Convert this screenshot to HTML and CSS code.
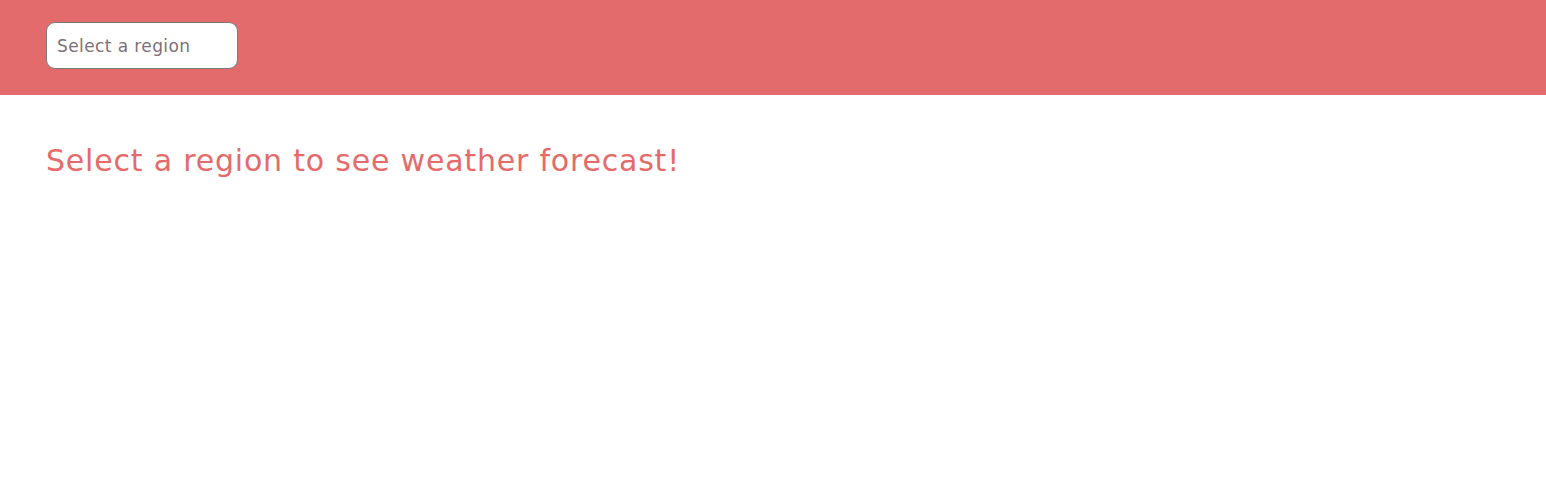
FILE: index.html
```html
<!DOCTYPE html>
<html lang="en">
<head>
<meta charset="utf-8">
<title>Weather</title>
<link rel="stylesheet" href="styles.css">
</head>
<body>
<header class="topbar">
  <input class="region-input" type="text" placeholder="Select a region">
</header>
<main class="content">
  <h1 class="prompt">Select a region to see weather forecast!</h1>
</main>
</body>
</html>
```
FILE: styles.css
```css
* { box-sizing: border-box; }
body {
  margin: 0;
  font-family: "DejaVu Sans", "Noto Sans", sans-serif;
  background: #ffffff;
}
.topbar {
  height: 95px;
  background: #e36b6b;
  display: flex;
  align-items: flex-start;
  padding: 22px 46px 0;
}
.region-input {
  width: 192px;
  height: 47px;
  border: 1px solid #7a7a7a;
  border-radius: 9px;
  padding: 1px 10px 0;
  font-family: "DejaVu Sans", "Noto Sans", sans-serif;
  font-size: 17px;
  letter-spacing: 0.4px;
  color: #333;
  background: #fff;
  outline: none;
}
.region-input::placeholder {
  color: #7c7077;
}
.content {
  padding: 0 46px;
}
.prompt {
  margin: 42px 0 0;
  font-weight: 400;
  font-size: 30px;
  letter-spacing: 0.8px;
  color: #e56b6b;
  line-height: 48px;
}
```
